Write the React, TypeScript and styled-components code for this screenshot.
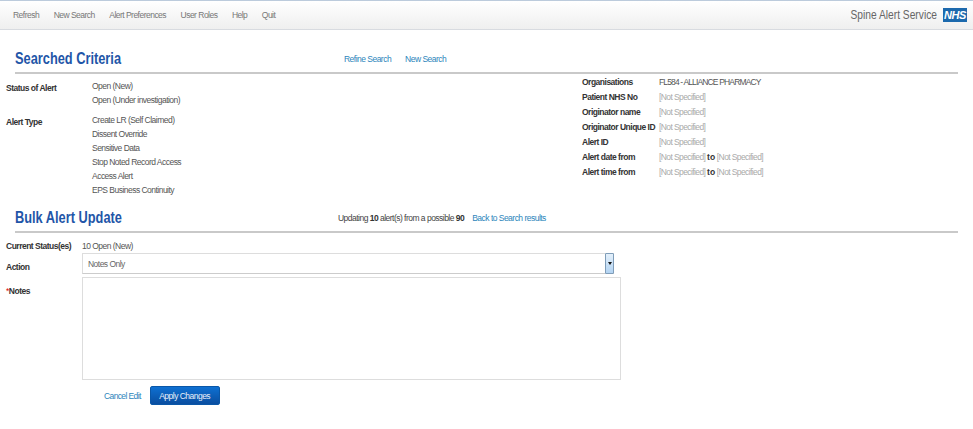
import React from 'react'
import styled, { createGlobalStyle } from 'styled-components'

const GlobalStyle = createGlobalStyle`
  html, body {
    margin: 0;
    padding: 0;
    background: #fff;
  }
  body {
    font-family: "Liberation Sans", Arial, sans-serif;
    font-size: 8.5px;
    letter-spacing: -0.52px;
    color: #444;
  }
`

const Page = styled.div`
  width: 973px;
  height: 429px;
  overflow: hidden;
  background: #fff;
`

const NavBar = styled.div`
  height: 28px;
  display: flex;
  align-items: center;
  justify-content: space-between;
  padding: 0 6px 0 13px;
  border-top: 1px solid #bccbdc;
  border-bottom: 1px solid #d8dbe0;
  background: linear-gradient(to bottom, #fff, #efefef);
`

const NavLinks = styled.div`
  display: flex;
  gap: 14.5px;
`

const NavLink = styled.a`
  color: #777;
`

const Brand = styled.div`
  display: flex;
  align-items: center;
  gap: 6px;
  color: #666;
`

const BrandName = styled.span`
  font-size: 12.2px;
  letter-spacing: 0;
  transform: scaleX(0.84);
  transform-origin: right center;
`

const NhsLogo = styled.span`
  width: 24px;
  height: 14px;
  background: #1c69ad;
  color: #fff;
  font-size: 11px;
  font-weight: 700;
  font-style: italic;
  line-height: 14px;
  text-align: center;
  letter-spacing: -0.4px;
`

const SectionHead = styled.div<{ $top: number; $height: number; $title: number }>`
  margin: ${p => p.$top}px 15px 0;
  height: ${p => p.$height}px;
  box-sizing: border-box;
  display: grid;
  grid-template-columns: ${p => p.$title}px 1fr;
  align-items: center;
  border-bottom: 2px solid #c9c9c9;
`

const Title = styled.h2`
  margin: 0;
  justify-self: start;
  white-space: nowrap;
  color: #1f56a8;
  font-size: 16px;
  font-weight: 700;
  letter-spacing: 0;
  transform: scaleX(0.8);
  transform-origin: left center;
`

const HeadAside = styled.div<{ $gap: number }>`
  display: flex;
  align-items: center;
  gap: ${p => p.$gap}px;
  color: #444;
  b {
    color: #333;
  }
`

const BlueLink = styled.a`
  color: #2c85bb;
`

const Criteria = styled.div`
  display: grid;
  grid-template-columns: 576px 1fr;
  padding: 7px 0 0 6px;
`

const CriteriaLeft = styled.div`
  display: flex;
  flex-direction: column;
  gap: 8px;
`

const LeftRow = styled.div`
  display: grid;
  grid-template-columns: 86px 1fr;
`

const Label = styled.div`
  font-weight: 700;
  letter-spacing: -0.5px;
  color: #333;
  line-height: 14px;
  white-space: nowrap;
`

const ValueList = styled.div`
  line-height: 14px;
  color: #555;
  margin-top: -2px;
`

const CriteriaRight = styled.div`
  display: grid;
  grid-template-columns: 77px 1fr;
  grid-auto-rows: 15px;
  line-height: 15px;
  margin-top: -6px;
`

const Value = styled.div<{ $muted?: boolean; $spacing?: number }>`
  color: ${p => (p.$muted ? '#aaa' : '#555')};
  letter-spacing: ${p => p.$spacing ?? -0.6}px;
  white-space: nowrap;
  b {
    color: #333;
    letter-spacing: 0;
  }
`

const UpdateForm = styled.div`
  padding: 6px 0 0 6px;
  display: grid;
  grid-template-columns: 76px 532px;
  align-items: start;
`

const FormLabel = styled(Label)<{ $pad?: number }>`
  padding-top: ${p => p.$pad || 0}px;
`

const Required = styled.span`
  color: #d00;
  font-weight: 400;
`

const StatusText = styled.div`
  color: #555;
  line-height: 14px;
`

const SelectBox = styled.div`
  height: 21px;
  box-sizing: border-box;
  width: 532px;
  display: flex;
  align-items: center;
  justify-content: space-between;
  padding-left: 5px;
  border: 1px solid #ddd;
  border-bottom-color: #ccc;
  color: #666;
`

const SelectArrow = styled.span`
  width: 9px;
  height: 21px;
  box-sizing: border-box;
  display: flex;
  align-items: center;
  justify-content: center;
  margin-right: -1px;
  border: 1px solid #7f9db9;
  border-radius: 1px;
  background: linear-gradient(to bottom, #e4f0fb, #b3d4f2);
  &::after {
    content: '';
    border-left: 2px solid transparent;
    border-right: 2px solid transparent;
    border-top: 3px solid #111;
  }
`

const NotesBox = styled.div`
  height: 103px;
  box-sizing: border-box;
  width: 539px;
  margin-top: 3px;
  border: 1px solid #ddd;
`

const Actions = styled.div`
  grid-column: 2;
  display: flex;
  align-items: center;
  gap: 9px;
  margin-top: 6px;
  padding-left: 22px;
`

const ApplyButton = styled.button`
  width: 70px;
  height: 19px;
  padding: 0;
  border: 1px solid #0a57a8;
  border-radius: 2px;
  background: linear-gradient(to bottom, #0e70d2, #0a4ea0);
  color: #e8f0fa;
  font-family: inherit;
  font-size: 8.5px;
  letter-spacing: -0.52px;
`

const CancelLink = styled(BlueLink)`
  letter-spacing: -0.62px;
`

const navItems = ['Refresh', 'New Search', 'Alert Preferences', 'User Roles', 'Help', 'Quit']
const statuses = ['Open (New)', 'Open (Under investigation)']
const alertTypes = [
  'Create LR (Self Claimed)',
  'Dissent Override',
  'Sensitive Data',
  'Stop Noted Record Access',
  'Access Alert',
  'EPS Business Continuity',
]
const notSpecifiedRows = ['Patient NHS No', 'Originator name', 'Originator Unique ID', 'Alert ID']
const rangeRows = ['Alert date from', 'Alert time from']

const App: React.FC = () => {
  return (
    <>
      <GlobalStyle />
      <Page>
        <NavBar>
          <NavLinks>
            {navItems.map(item => (
              <NavLink key={item}>{item}</NavLink>
            ))}
          </NavLinks>
          <Brand>
            <BrandName>Spine Alert Service</BrandName>
            <NhsLogo>NHS</NhsLogo>
          </Brand>
        </NavBar>

        <SectionHead $top={15} $height={29} $title={329}>
          <Title>Searched Criteria</Title>
          <HeadAside $gap={14}>
            <BlueLink>Refine Search</BlueLink>
            <BlueLink>New Search</BlueLink>
          </HeadAside>
        </SectionHead>

        <Criteria>
          <CriteriaLeft>
            <LeftRow>
              <Label>Status of Alert</Label>
              <ValueList>
                {statuses.map(s => (
                  <div key={s}>{s}</div>
                ))}
              </ValueList>
            </LeftRow>
            <LeftRow>
              <Label>Alert Type</Label>
              <ValueList>
                {alertTypes.map(s => (
                  <div key={s}>{s}</div>
                ))}
              </ValueList>
            </LeftRow>
          </CriteriaLeft>
          <CriteriaRight>
            <Label>Organisations</Label>
            <Value $spacing={-0.85}>FL584 - ALLIANCE PHARMACY</Value>
            {notSpecifiedRows.map(row => (
              <React.Fragment key={row}>
                <Label>{row}</Label>
                <Value $muted>[Not Specified]</Value>
              </React.Fragment>
            ))}
            {rangeRows.map(row => (
              <React.Fragment key={row}>
                <Label>{row}</Label>
                <Value $muted>
                  [Not Specified] <b>to</b> [Not Specified]
                </Value>
              </React.Fragment>
            ))}
          </CriteriaRight>
        </Criteria>

        <SectionHead $top={8} $height={28} $title={323}>
          <Title>Bulk Alert Update</Title>
          <HeadAside $gap={8}>
            <span>
              Updating <b>10</b> alert(s) from a possible <b>90</b>
            </span>
            <BlueLink>Back to Search results</BlueLink>
          </HeadAside>
        </SectionHead>

        <UpdateForm>
          <Label>Current Status(es)</Label>
          <StatusText>10 Open (New)</StatusText>
          <FormLabel $pad={7}>Action</FormLabel>
          <SelectBox>
            Notes Only
            <SelectArrow />
          </SelectBox>
          <FormLabel $pad={10}>
            <Required>*</Required>Notes
          </FormLabel>
          <NotesBox />
          <Actions>
            <CancelLink>Cancel Edit</CancelLink>
            <ApplyButton>Apply Changes</ApplyButton>
          </Actions>
        </UpdateForm>
      </Page>
    </>
  )
}

export default App
